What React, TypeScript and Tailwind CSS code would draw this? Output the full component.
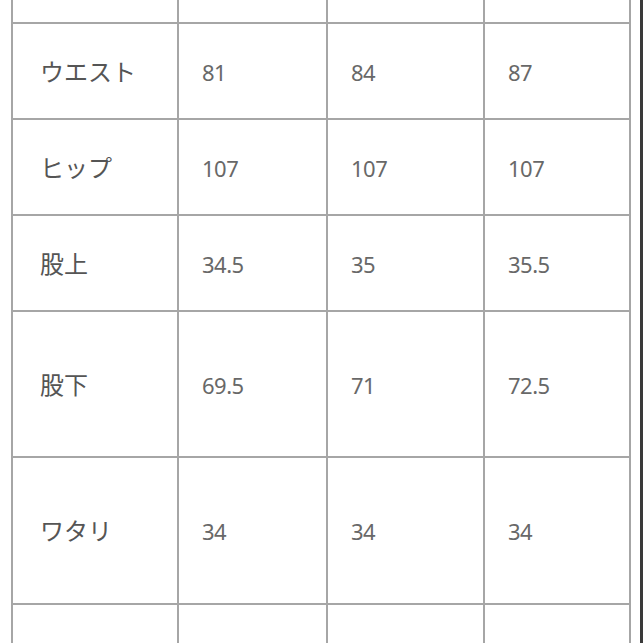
const rows: { label: string; values: string[]; h: string }[] = [
  { label: "", values: ["", "", ""], h: "h-[24px]" },
  { label: "ウエスト", values: ["81", "84", "87"], h: "h-[96px]" },
  { label: "ヒップ", values: ["107", "107", "107"], h: "h-[96px]" },
  { label: "股上", values: ["34.5", "35", "35.5"], h: "h-[96px]" },
  { label: "股下", values: ["69.5", "71", "72.5"], h: "h-[146px]" },
  { label: "ワタリ", values: ["34", "34", "34"], h: "h-[147px]" },
  { label: "", values: ["", "", ""], h: "h-[60px]" },
];

export default function App() {
  return (
    <div className="flex h-[643px] w-[643px] overflow-hidden bg-white font-['Noto_Sans','Noto_Sans_CJK_JP',sans-serif]">
      <div className="pl-[11px]">
        {rows.map((r, i) => (
          <div
            key={i}
            className={`grid grid-cols-[166px_149px_157px_146px] border-r-2 border-[#a6a6a6] ${r.h} ${
              i < rows.length - 1 ? "border-b-2" : ""
            }`}
          >
            <div className="flex items-center border-l-2 border-[#a6a6a6] pl-[27px] pt-[1px] text-[24px] text-[#555]">
              {r.label}
            </div>
            {r.values.map((v, j) => (
              <div
                key={j}
                className="flex items-center border-l-2 border-[#a6a6a6] pl-[23px] pt-[2px] text-[22px] tracking-[-0.5px] text-[#686868]"
              >
                {v}
              </div>
            ))}
          </div>
        ))}
      </div>
      <div className="flex-1" />
      <div className="w-[3px] bg-[#3a3a3a]" />
    </div>
  );
}
